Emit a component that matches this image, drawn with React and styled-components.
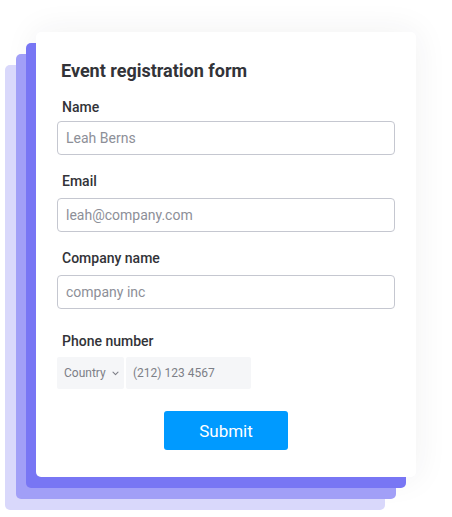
import React from "react";
import styled, { createGlobalStyle } from "styled-components";

const Global = createGlobalStyle`
  html, body { margin: 0; padding: 0; background: #ffffff; }
  body { font-family: Roboto, "Liberation Sans", Arial, sans-serif; -webkit-font-smoothing: antialiased; }
  * { box-sizing: border-box; }
`;

const Stage = styled.div`
  width: 452px;
  height: 517px;
  padding: 32px 0 0 36px;
  overflow: hidden;
`;

const Card = styled.form`
  width: 380px;
  height: 445px;
  background: #ffffff;
  border-radius: 5px;
  padding: 28px 21px 0 21px;
  display: flex;
  flex-direction: column;
  box-shadow:
    -10px 11px 0 #7876f4,
    -20px 22px 0 #a19ff7,
    -31px 33px 0 #d9d8fb,
    0 0 34px rgba(40, 40, 60, 0.07);
`;

const Title = styled.h1`
  margin: 0 0 17px 4px;
  font-size: 18px;
  line-height: 22px;
  font-weight: 700;
  color: #323338;
`;

const Field = styled.div`
  display: flex;
  flex-direction: column;
  gap: ${(p) => p.$gap}px;
  margin-top: ${(p) => p.$top}px;
`;

const Label = styled.label`
  margin-left: 5px;
  font-size: 14px;
  line-height: 16px;
  font-weight: 500;
  color: #323338;
`;

const TextInput = styled.input`
  width: 338px;
  height: 34px;
  border: 1px solid #c5c7d0;
  border-radius: 4px;
  padding: 0 8px;
  font-family: inherit;
  font-size: 14px;
  color: #323338;
  background: #fff;
  outline: none;
  &::placeholder { color: #8d8f98; opacity: 1; }
`;

const PhoneRow = styled.div`
  display: flex;
  gap: 2px;
`;

const CountrySelect = styled.div`
  width: 67px;
  height: 32px;
  background: #f5f6f8;
  border-radius: 2px;
  display: flex;
  align-items: center;
  padding-left: 7px;
  gap: 6px;
  font-size: 12px;
  color: #7d7f87;
`;

const PhoneInput = styled.input`
  width: 125px;
  height: 32px;
  border: none;
  background: #f5f6f8;
  border-radius: 2px;
  padding: 0 7px;
  font-family: inherit;
  font-size: 12px;
  outline: none;
  &::placeholder { color: #7d7f87; opacity: 1; }
`;

const Submit = styled.button`
  align-self: center;
  margin-top: 22px;
  width: 124px;
  height: 39px;
  border: none;
  border-radius: 3px;
  background: #009aff;
  color: #ffffff;
  font-family: inherit;
  font-size: 17px;
  font-weight: 400;
  cursor: pointer;
`;

const Chevron = () => (
  <svg width="7" height="5" viewBox="0 0 7 5" fill="none">
    <path d="M1 1.2 L3.5 3.6 L6 1.2" stroke="#7d7f87" strokeWidth="1.1" strokeLinecap="round" strokeLinejoin="round" />
  </svg>
);

export default function App() {
  return (
    <>
      <Global />
      <Stage>
        <Card onSubmit={(e) => e.preventDefault()}>
          <Title>Event registration form</Title>
          <Field $gap={6} $top={0}>
            <Label>Name</Label>
            <TextInput placeholder="Leah Berns" />
          </Field>
          <Field $gap={9} $top={18}>
            <Label>Email</Label>
            <TextInput placeholder="leah@company.com" />
          </Field>
          <Field $gap={9} $top={18}>
            <Label>Company name</Label>
            <TextInput placeholder="company inc" />
          </Field>
          <Field $gap={8} $top={24}>
            <Label>Phone number</Label>
            <PhoneRow>
              <CountrySelect>
                Country <Chevron />
              </CountrySelect>
              <PhoneInput placeholder="(212) 123 4567" />
            </PhoneRow>
          </Field>
          <Submit type="submit">Submit</Submit>
        </Card>
      </Stage>
    </>
  );
}
